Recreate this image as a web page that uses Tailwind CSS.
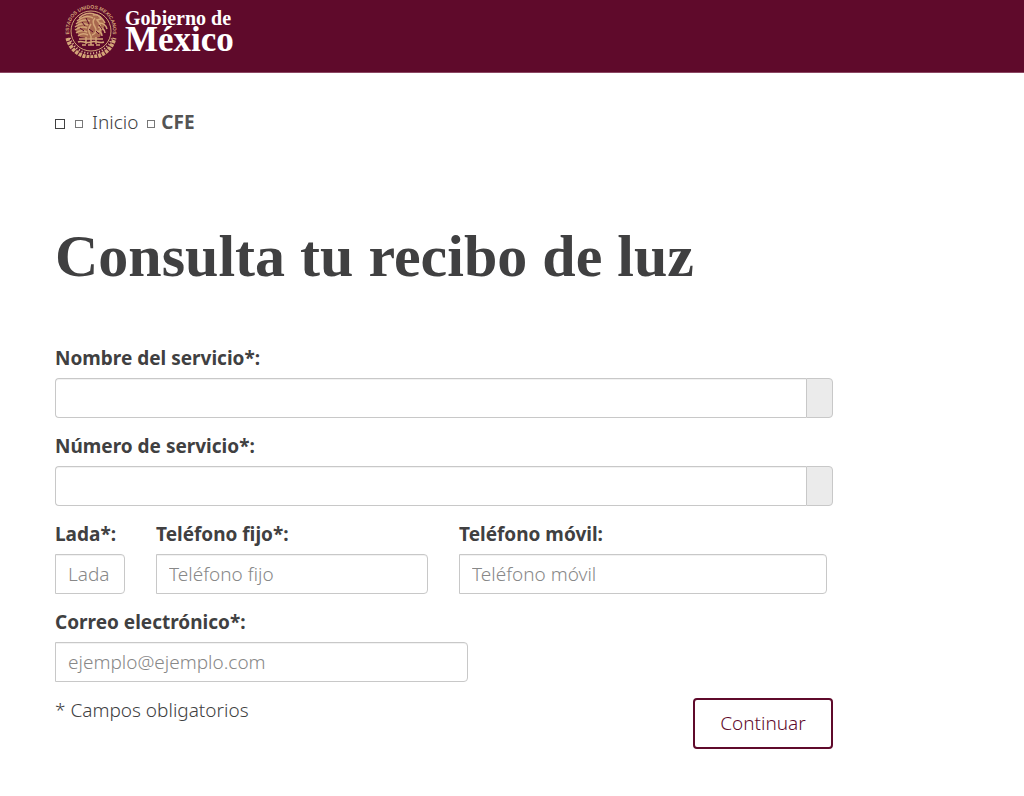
<!DOCTYPE html>
<html lang="es">
  <head>
    <meta charset="utf-8" />
    <meta name="viewport" content="width=device-width, initial-scale=1" />
    <title>Consulta tu recibo de luz</title>
    <script src="https://cdn.jsdelivr.net/npm/@tailwindcss/browser@4"></script>
  </head>

  <body class="bg-white font-['Noto_Sans',sans-serif] text-[#404041]">
    <header class="h-[73px] border-b border-[#8c4763] bg-[#5f0a2b] pl-16">
      <a href="#" class="flex items-start gap-[7px] pt-1 text-white">
        <svg class="size-[54px]" viewBox="0 0 54 54" fill="none" stroke="#d3a477" aria-hidden="true">
          <defs>
            <path id="ring" d="M6.700 35 A22 22 0 1 1 47.300 35" />
          </defs>
          <text font-family="Liberation Sans" font-size="5" font-weight="bold" fill="#d3a477" stroke="none" text-anchor="middle">
            <textPath href="#ring" startOffset="50%">ESTADOS UNIDOS MEXICANOS</textPath>
          </text>
          <circle cx="27" cy="27" r="20" stroke-width="1" />
          <!-- wreath -->
          <path d="M3.500 34 A24 24 0 0 0 50.500 34" stroke-width="4" stroke-dasharray="3 1" />
          <path d="M6 34 A22 22 0 0 0 48 34" stroke-width="2" stroke-dasharray="1 2" stroke="#e8c49b" />
          <!-- eagle -->
          <path d="M15 16c4-5 10-7 16-5 5 2 9 5 10 10l-3 6-2 6-8 2-12-2-4-6z" fill="#a9694f" stroke="none" />
          <path d="M15 14c4-4 10-6 15-4 5 1 9 5 11 9M13 17c5-4 11-6 16-3M12 20c5-4 9-5 14-3M11 23c5-4 9-4 13-2M11 26c4-3 8-4 12-2M12 29c4-3 7-3 11-1M14 32c3-3 6-3 10-1" stroke-width="1.500" />
          <path d="M29 11c4-1 7 1 8 4l-4 1c3 3 4 7 3 11M31 14c-3 3-2 6 0 9s1 7-3 8M35 19c4 0 7 2 8 6M34 23c4 0 7 3 7 6M32 27c4 0 6 2 6 5M27 20c-3 4-3 8 0 12" stroke-width="1.500" />
          <path d="M18 18l3 4m1-8l3 6m-9 4l4 3m5-2l4 3m6-7l3 4m-6 2l3 3" stroke-width="1" stroke="#5f0a2b" />
          <!-- cactus and lake -->
          <path d="M15 35h24M14 38c4-2 8 2 13 0s8 2 13 0M18 41h4m2 0h6m2 0h4M22 33v7m10-7v7M27 32v9" stroke-width="1.500" />
        </svg>
        <span class="flex flex-col pt-1 font-['Liberation_Serif',serif] font-bold">
          <span class="text-xl leading-5">Gobierno de</span>
          <span class="text-[35px] leading-6">México</span>
        </span>
      </a>
    </header>

    <main class="px-[55px] pt-[37px] pb-12">
      <nav aria-label="Ruta" class="flex h-6 items-center text-[19px] font-light leading-6">
        <a href="#" aria-label="Portada" class="mt-1 size-[10px] border border-[#404041]"></a>
        <span class="mt-1 ml-[10px] size-2 border border-[#777]"></span>
        <a href="#" class="ml-[9px]">Inicio</a>
        <span class="mt-1 ml-[9px] size-2 border border-[#777]"></span>
        <span class="ml-1.5 font-bold text-[#545454]">CFE</span>
      </nav>

      <h1 class="mt-[90px] font-['Liberation_Serif',serif] text-[60px] leading-16 font-bold">
        Consulta tu recibo de luz
      </h1>

      <form class="mt-[58px] max-w-[778px] text-[19px] font-light">
        <div class="mb-4">
          <label for="nombre" class="mb-2 block leading-6 font-bold">Nombre del servicio*:</label>
          <div class="flex h-10">
            <input id="nombre" type="text" class="min-w-0 flex-1 rounded-l border border-r-0 border-[#c8c8c8] px-3 inset-shadow-2xs" />
            <span class="w-[27px] rounded-r border border-[#c8c8c8] bg-[#ebebeb]"></span>
          </div>
        </div>

        <div class="mb-4">
          <label for="numero" class="mb-2 block leading-6 font-bold">Número de servicio*:</label>
          <div class="flex h-10">
            <input id="numero" type="text" class="min-w-0 flex-1 rounded-l border border-r-0 border-[#c8c8c8] px-3 inset-shadow-2xs" />
            <span class="w-[27px] rounded-r border border-[#c8c8c8] bg-[#ebebeb]"></span>
          </div>
        </div>

        <div class="mb-4 grid grid-cols-[70px_272fr_368fr] gap-[31px] pr-1.5">
          <div>
            <label for="lada" class="mb-2 block leading-6 font-bold">Lada*:</label>
            <input id="lada" type="text" placeholder="Lada" class="h-10 w-full rounded-r border border-[#c8c8c8] px-3 inset-shadow-2xs placeholder:text-[#888]" />
          </div>
          <div>
            <label for="fijo" class="mb-2 block leading-6 font-bold">Teléfono fijo*:</label>
            <input id="fijo" type="tel" placeholder="Teléfono fijo" class="h-10 w-full rounded-r border border-[#c8c8c8] px-3 inset-shadow-2xs placeholder:text-[#888]" />
          </div>
          <div>
            <label for="movil" class="mb-2 block leading-6 font-bold">Teléfono móvil:</label>
            <input id="movil" type="tel" placeholder="Teléfono móvil" class="h-10 w-full rounded-r border border-[#c8c8c8] px-3 inset-shadow-2xs placeholder:text-[#888]" />
          </div>
        </div>

        <div class="mb-4">
          <label for="correo" class="mb-2 block leading-6 font-bold">Correo electrónico*:</label>
          <input id="correo" type="email" placeholder="ejemplo@ejemplo.com" class="h-10 w-full max-w-[413px] rounded-r border border-[#c8c8c8] px-3 inset-shadow-2xs placeholder:text-[#888]" />
        </div>

        <div class="flex items-start justify-between">
          <p class="leading-6">* Campos obligatorios</p>
          <button type="button" class="h-[51px] w-[140px] rounded-sm border-2 border-[#5f0a2b] text-[#5f0a2b]">Continuar</button>
        </div>
      </form>
    </main>
  </body>
</html>
